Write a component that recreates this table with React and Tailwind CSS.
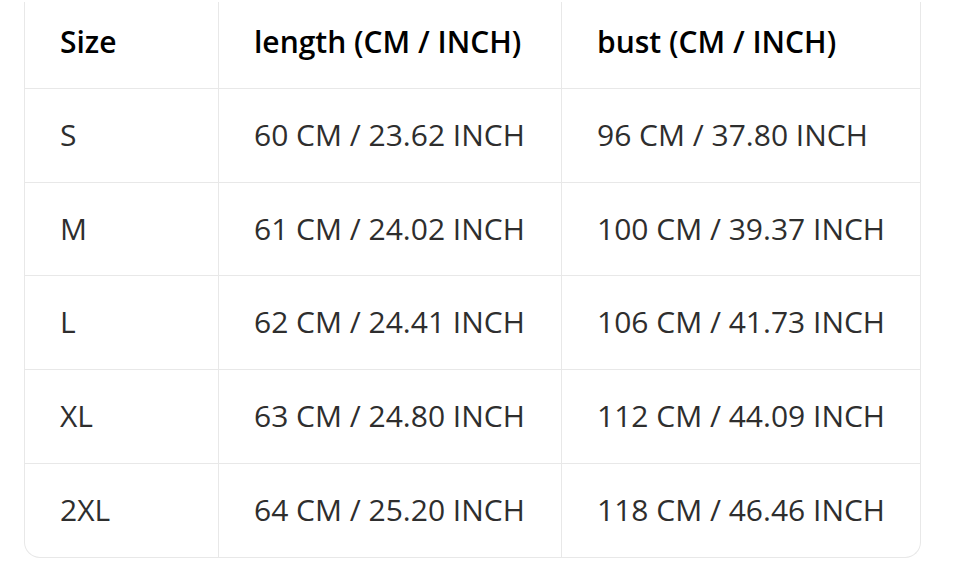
const ROWS = [
  ['S', '60 CM / 23.62 INCH', '96 CM / 37.80 INCH', 'h-[94px]'],
  ['M', '61 CM / 24.02 INCH', '100 CM / 39.37 INCH', 'h-[93px]'],
  ['L', '62 CM / 24.41 INCH', '106 CM / 41.73 INCH', 'h-[94px]'],
  ['XL', '63 CM / 24.80 INCH', '112 CM / 44.09 INCH', 'h-[94px]'],
  ['2XL', '64 CM / 25.20 INCH', '118 CM / 46.46 INCH', 'h-[93px]'],
]

const COLS = 'grid grid-cols-[194px_343px_358px]'

export default function App() {
  return (
    <div className="min-h-[567px] bg-white pt-[2px] font-['Open_Sans',sans-serif]">
      <div className="ml-[24px] w-[897px] border-x border-b border-[#e8e8e8] rounded-b-2xl overflow-hidden">
        <div className={`${COLS} h-[87px] border-b border-[#e8e8e8] text-[30px] font-semibold text-black`}>
          <div className="flex items-center pl-[35px] pb-[7px] border-r border-[#e8e8e8]">Size</div>
          <div className="flex items-center pl-[35px] pb-[7px] border-r border-[#e8e8e8]">length (CM / INCH)</div>
          <div className="flex items-center pl-[35px] pb-[7px]">bust (CM / INCH)</div>
        </div>
        {ROWS.map((row, i) => (
          <div
            key={row[0]}
            className={`${COLS} ${row[3]} ${i < ROWS.length - 1 ? 'border-b border-[#e8e8e8]' : ''} text-[30px] text-[#2e2e2e]`}
          >
            <div className="flex items-center pl-[35px] pb-[2px] border-r border-[#e8e8e8]">{row[0]}</div>
            <div className="flex items-center pl-[35px] pb-[2px] border-r border-[#e8e8e8]">{row[1]}</div>
            <div className="flex items-center pl-[35px] pb-[2px]">{row[2]}</div>
          </div>
        ))}
      </div>
    </div>
  )
}
